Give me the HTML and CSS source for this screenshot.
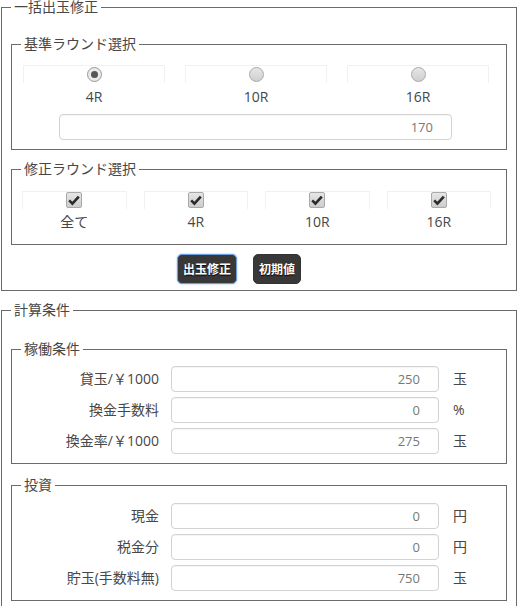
FILE: index.html
```html
<!DOCTYPE html>
<html lang="ja">
<head>
<meta charset="utf-8">
<title>一括出玉修正</title>
<link rel="stylesheet" href="styles.css">
</head>
<body>
<fieldset class="outer outer-1">
  <legend>一括出玉修正</legend>
  <fieldset class="inner inner-base">
    <legend>基準ラウンド選択</legend>
    <div class="choice-grid cols-3">
      <div class="choice">
        <div class="cell"><span class="radio checked"></span></div>
        <div class="choice-label">4R</div>
      </div>
      <div class="choice">
        <div class="cell"><span class="radio"></span></div>
        <div class="choice-label">10R</div>
      </div>
      <div class="choice">
        <div class="cell"><span class="radio"></span></div>
        <div class="choice-label">16R</div>
      </div>
    </div>
    <input class="num base-input" type="text" value="170" readonly>
  </fieldset>
  <fieldset class="inner inner-fix">
    <legend>修正ラウンド選択</legend>
    <div class="choice-grid cols-4">
      <div class="choice">
        <div class="cell"><span class="check"><svg viewBox="0 0 16 16" width="16" height="16"><path d="M3.2 8.4 L6.4 11.6 L12.8 4.6" fill="none" stroke="#2a2a2a" stroke-width="2.6" stroke-linecap="butt" stroke-linejoin="miter"/></svg></span></div>
        <div class="choice-label">全て</div>
      </div>
      <div class="choice">
        <div class="cell"><span class="check"><svg viewBox="0 0 16 16" width="16" height="16"><path d="M3.2 8.4 L6.4 11.6 L12.8 4.6" fill="none" stroke="#2a2a2a" stroke-width="2.6" stroke-linecap="butt" stroke-linejoin="miter"/></svg></span></div>
        <div class="choice-label">4R</div>
      </div>
      <div class="choice">
        <div class="cell"><span class="check"><svg viewBox="0 0 16 16" width="16" height="16"><path d="M3.2 8.4 L6.4 11.6 L12.8 4.6" fill="none" stroke="#2a2a2a" stroke-width="2.6" stroke-linecap="butt" stroke-linejoin="miter"/></svg></span></div>
        <div class="choice-label">10R</div>
      </div>
      <div class="choice">
        <div class="cell"><span class="check"><svg viewBox="0 0 16 16" width="16" height="16"><path d="M3.2 8.4 L6.4 11.6 L12.8 4.6" fill="none" stroke="#2a2a2a" stroke-width="2.6" stroke-linecap="butt" stroke-linejoin="miter"/></svg></span></div>
        <div class="choice-label">16R</div>
      </div>
    </div>
  </fieldset>
  <div class="buttons">
    <button class="btn btn-focus" type="button">出玉修正</button>
    <button class="btn" type="button">初期値</button>
  </div>
</fieldset>

<fieldset class="outer outer-2">
  <legend>計算条件</legend>
  <fieldset class="inner inner-op">
    <legend>稼働条件</legend>
    <div class="row"><span class="row-label">貸玉/￥1000</span><input class="num" type="text" value="250" readonly><span class="unit">玉</span></div>
    <div class="row"><span class="row-label">換金手数料</span><input class="num" type="text" value="0" readonly><span class="unit">%</span></div>
    <div class="row"><span class="row-label">換金率/￥1000</span><input class="num" type="text" value="275" readonly><span class="unit">玉</span></div>
  </fieldset>
  <fieldset class="inner inner-inv">
    <legend>投資</legend>
    <div class="row"><span class="row-label">現金</span><input class="num" type="text" value="0" readonly><span class="unit">円</span></div>
    <div class="row"><span class="row-label">税金分</span><input class="num" type="text" value="0" readonly><span class="unit">円</span></div>
    <div class="row"><span class="row-label">貯玉(手数料無)</span><input class="num" type="text" value="750" readonly><span class="unit">玉</span></div>
  </fieldset>
</fieldset>
</body>
</html>
```

FILE: styles.css
```css
* { box-sizing: border-box; }

html, body {
  margin: 0;
  padding: 0;
  background: #fff;
}

body {
  font-family: "Open Sans", "Noto Sans CJK JP", sans-serif;
  font-size: 14px;
  color: #474747;
}

fieldset {
  margin: 0;
  min-width: 0;
  border: 1px solid #6a6a6a;
}

legend {
  font-size: 14px;
  line-height: 14px;
  padding: 0 3px;
  margin: 0;
  color: #474747;
}

.outer {
  margin: 0 1px;
  padding: 23px 9px 6px 9px;
}

.outer-2 {
  margin-top: 12px;
  padding-top: 25px;
}

.inner {
  padding: 14px 9px 9px 9px;
}

.inner-fix {
  margin-top: 12px;
  padding-top: 15px;
  padding-bottom: 12px;
}

.inner-op {
  padding-top: 10px;
  padding-bottom: 9px;
}

.inner-inv {
  margin-top: 14px;
  padding-top: 11px;
  padding-bottom: 9px;
}

/* choice grids */
.choice-grid {
  display: grid;
  margin-left: -8px;
  width: 486px;
}

.cols-3 { grid-template-columns: repeat(3, 1fr); }
.cols-4 { grid-template-columns: repeat(4, 1fr); }

.cols-3 .choice { padding: 0 10px; }
.cols-4 .choice { padding: 0 8px 0 9px; }

.cell {
  height: 18px;
  border: 1px solid #f1f1f1;
  border-bottom: none;
  display: flex;
  justify-content: center;
}

.choice-label {
  text-align: center;
  line-height: 20px;
  font-size: 14px;
  color: #474747;
}

.cols-3 .choice-label { margin-top: 4px; }
.cols-4 .choice-label { margin-top: 3px; }

.radio {
  display: block;
  width: 15px;
  height: 15px;
  margin-top: 1px;
  border-radius: 50%;
  border: 1px solid #a9a9a9;
  background: linear-gradient(#e6e6e6, #cfcfcf);
  position: relative;
}

.radio.checked {
  background: #e9e9e9;
  border-color: #9a9a9a;
}

.radio.checked::after {
  content: "";
  position: absolute;
  left: 3px;
  top: 3px;
  width: 7px;
  height: 7px;
  border-radius: 50%;
  background: #555;
}

.check {
  display: block;
  width: 16px;
  height: 16px;
  border: 1px solid #a9a9a9;
  border-radius: 2px;
  background: linear-gradient(#e6e6e6, #cdcdcd);
}

.check svg {
  display: block;
  margin: -1px 0 0 -1px;
}

/* inputs */
.num {
  display: block;
  height: 26px;
  border: 1px solid #d2d2d2;
  border-radius: 4px;
  background: #fff;
  padding: 0 18px 0 6px;
  text-align: right;
  font-family: "Open Sans", "Noto Sans CJK JP", sans-serif;
  font-size: 13px;
  color: #777;
  outline: none;
  box-shadow: inset 0 1px 1px rgba(0,0,0,0.04);
}

.base-input {
  margin: 7px 0 0 38px;
  width: 393px;
}

/* buttons */
.buttons {
  display: flex;
  gap: 16px;
  margin-top: 9px;
  padding-left: 166px;
}

.btn {
  height: 30px;
  padding: 0 5px;
  border: 1px solid #333;
  border-radius: 5px;
  background: #383838;
  color: #fff;
  font-family: "Noto Sans CJK JP", sans-serif;
  font-weight: bold;
  font-size: 12px;
  line-height: 28px;
  text-shadow: 0 1px 1px #000;
  cursor: pointer;
}

.btn-focus {
  border: 1px solid #6b9fe0;
  box-shadow: 0 0 2px #8ab8ee;
}

/* rows */
.row {
  display: grid;
  grid-template-columns: 138px 268px auto;
  column-gap: 12px;
  align-items: center;
}

.row + .row { margin-top: 5px; }

.row-label {
  text-align: right;
  line-height: 26px;
  font-size: 14px;
  color: #474747;
  white-space: nowrap;
}

.row .num { width: 268px; }

.unit {
  margin-left: 2px;
  line-height: 26px;
  font-size: 14px;
  color: #474747;
}
```
